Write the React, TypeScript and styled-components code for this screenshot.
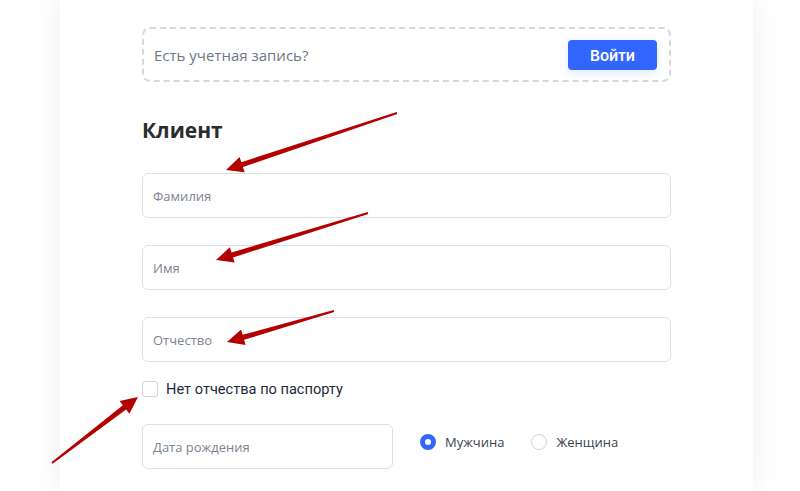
import React from 'react';
import styled, { createGlobalStyle } from 'styled-components';

const GlobalStyle = createGlobalStyle`
	html, body {
		margin: 0;
		padding: 0;
		background: #fff;
	}
	#root {
		height: 491px;
		overflow: hidden;
	}
`;

const Page = styled.div`
	position: relative;
	height: 491px;
	padding-left: 60px;
	background: #fff;
	font-family: 'Open Sans', 'Noto Sans', sans-serif;
`;

const Card = styled.div`
	width: 693px;
	height: 100%;
	box-sizing: border-box;
	padding: 27px 82px 0;
	background: #fff;
	box-shadow: 0 0 28px rgba(0, 0, 0, 0.07);
	display: flex;
	flex-direction: column;
`;

const LoginBox = styled.div`
	height: 55px;
	box-sizing: border-box;
	border: 2px dashed #d4d9e1;
	border-radius: 8px;
	display: flex;
	align-items: center;
	justify-content: space-between;
	padding: 0 12px 0 10px;
`;

const LoginText = styled.span`
	font-size: 15px;
	color: #6d7886;
`;

const LoginButton = styled.button`
	width: 89px;
	height: 30px;
	margin-top: 1px;
	border: none;
	border-radius: 4px;
	background: #3366ff;
	color: #fff;
	font-family: Inter, 'Noto Sans', sans-serif;
	font-weight: 600;
	font-size: 15px;
	box-shadow: 0 3px 8px rgba(51, 102, 255, 0.15);
`;

const Heading = styled.h2`
	margin: 35px 0 30px;
	font-size: 21px;
	line-height: 26px;
	font-weight: 700;
	color: #2a2c30;
`;

const Fields = styled.div`
	display: flex;
	flex-direction: column;
	gap: 27px;
`;

const Field = styled.div<{ $width?: number }>`
	width: ${({ $width }) => ($width ? `${$width}px` : '100%')};
	height: 45px;
	box-sizing: border-box;
	border: 1px solid #dcdfe5;
	border-radius: 6px;
	display: flex;
	align-items: center;
	padding-left: 10px;
	font-size: 13px;
	color: #7b8491;
	flex-shrink: 0;
`;

const CheckRow = styled.label`
	display: flex;
	align-items: center;
	gap: 8px;
	margin: 18px 0 26px;
	font-family: Roboto, 'Noto Sans', sans-serif;
	font-size: 14.6px;
	color: #1e2a3a;
`;

const CheckBox = styled.span`
	width: 16px;
	height: 16px;
	box-sizing: border-box;
	border: 1px solid #cdd2d9;
	border-radius: 3px;
	background: #fff;
`;

const BirthRow = styled.div`
	display: flex;
	align-items: center;
`;

const RadioGroup = styled.div`
	display: flex;
	align-items: center;
	gap: 27px;
	margin-left: 27px;
	margin-top: -10px;
`;

const RadioOption = styled.label`
	display: flex;
	align-items: center;
	gap: 9px;
	font-size: 13px;
	color: #3a4352;
`;

const RadioDot = styled.span<{ $checked?: boolean }>`
	width: 16px;
	height: 16px;
	box-sizing: border-box;
	border-radius: 50%;
	background: #fff;
	border: ${({ $checked }) => ($checked ? '5px solid #3366ff' : '1.5px solid #cfd3da')};
`;

const Overlay = styled.svg`
	position: absolute;
	left: 0;
	top: 0;
	pointer-events: none;
`;

const arrows = [
	{ from: [397, 113], to: [226, 170] },
	{ from: [368, 213], to: [216, 260] },
	{ from: [334, 311], to: [227, 342] },
	{ from: [52, 463], to: [138, 397] },
];

// tapered shaft + filled head
const arrowPoints = (from: number[], to: number[]) => {
	const [x1, y1] = from;
	const [x2, y2] = to;
	const len = Math.hypot(x2 - x1, y2 - y1);
	const ux = (x2 - x1) / len;
	const uy = (y2 - y1) / len;
	const nx = -uy;
	const ny = ux;
	const headLen = 17;
	const headW = 8;
	const bx = x2 - ux * headLen;
	const by = y2 - uy * headLen;
	const p = (x: number, y: number) => `${x.toFixed(1)},${y.toFixed(1)}`;
	return [
		p(x1 + nx * 1, y1 + ny * 1),
		p(bx + nx * 2.6, by + ny * 2.6),
		p(bx + nx * headW, by + ny * headW),
		p(x2, y2),
		p(bx - nx * headW, by - ny * headW),
		p(bx - nx * 2.6, by - ny * 2.6),
		p(x1 - nx * 1, y1 - ny * 1),
	].join(' ');
};

export default function App() {
	return (
		<>
			<GlobalStyle />
			<Page>
				<Card>
					<LoginBox>
						<LoginText>Есть учетная запись?</LoginText>
						<LoginButton>Войти</LoginButton>
					</LoginBox>
					<Heading>Клиент</Heading>
					<Fields>
						<Field>Фамилия</Field>
						<Field>Имя</Field>
						<Field>Отчество</Field>
					</Fields>
					<CheckRow>
						<CheckBox />
						Нет отчества по паспорту
					</CheckRow>
					<BirthRow>
						<Field $width={251}>Дата рождения</Field>
						<RadioGroup>
							<RadioOption>
								<RadioDot $checked />
								Мужчина
							</RadioOption>
							<RadioOption>
								<RadioDot />
								Женщина
							</RadioOption>
						</RadioGroup>
					</BirthRow>
				</Card>
				<Overlay width="800" height="491" viewBox="0 0 800 491">
					{arrows.map((a, i) => (
						<polygon key={i} points={arrowPoints(a.from, a.to)} fill="#b30000" />
					))}
				</Overlay>
			</Page>
		</>
	);
}
